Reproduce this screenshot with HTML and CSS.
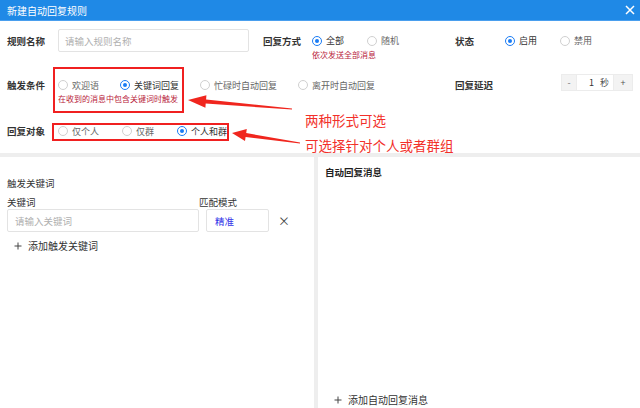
FILE: index.html
```html
<!DOCTYPE html>
<html lang="zh">
<head>
<meta charset="utf-8">
<title>新建自动回复规则</title>
<link rel="stylesheet" href="styles.css">
</head>
<body>
<div class="dialog">
  <header class="titlebar">
    <span class="title">新建自动回复规则</span>
    <svg class="close" width="10" height="10" viewBox="0 0 10 10"><path d="M1 1L9 9M9 1L1 9" stroke="#fff" stroke-width="1.5" fill="none"/></svg>
  </header>

  <section class="form">
    <div class="row row1">
      <div class="lbl">规则名称</div>
      <div class="input name-input">请输入规则名称</div>
      <div class="lbl">回复方式</div>
      <div class="group">
        <div class="radios">
          <span class="radio on"><i></i>全部</span>
          <span class="radio"><i></i>随机</span>
        </div>
        <div class="hint">依次发送全部消息</div>
      </div>
      <div class="lbl">状态</div>
      <div class="radios radios-status">
        <span class="radio on"><i></i>启用</span>
        <span class="radio"><i></i>禁用</span>
      </div>
    </div>

    <div class="row row2">
      <div class="lbl">触发条件</div>
      <div class="group span-wide">
        <div class="radios">
          <span class="radio"><i></i>欢迎语</span>
          <span class="radio on"><i></i>关键词回复</span>
          <span class="radio"><i></i>忙碌时自动回复</span>
          <span class="radio"><i></i>离开时自动回复</span>
        </div>
        <div class="hint">在收到的消息中包含关键词时触发</div>
      </div>
      <div class="lbl">回复延迟</div>
      <div class="stepper">
        <span class="step-btn minus">-</span>
        <span class="step-val"><b>1</b><em>秒</em></span>
        <span class="step-btn plus">+</span>
      </div>
    </div>

    <div class="row row3">
      <div class="lbl">回复对象</div>
      <div class="radios span-wide">
        <span class="radio"><i></i>仅个人</span>
        <span class="radio"><i></i>仅群</span>
        <span class="radio on"><i></i>个人和群</span>
      </div>
    </div>
  </section>

  <div class="band"></div>

  <div class="split">
    <div class="left">
      <div class="sec-title">触发关键词</div>
      <div class="kw-grid">
        <div class="kw-lbl">关键词</div>
        <div class="kw-lbl">匹配模式</div>
        <div></div>
        <div class="input kw-input">请输入关键词</div>
        <div class="input select">精准</div>
        <div class="remove">×</div>
      </div>
      <div class="add add-kw"><svg class="plus-icon" width="8" height="8" viewBox="0 0 8 8"><path d="M4 0.5V7.5M0.5 4H7.5" stroke="#444" stroke-width="1" fill="none"/></svg>添加触发关键词</div>
    </div>
    <div class="divider"></div>
    <div class="right">
      <div class="sec-title strong">自动回复消息</div>
      <div class="add add-msg"><svg class="plus-icon" width="8" height="8" viewBox="0 0 8 8"><path d="M4 0.5V7.5M0.5 4H7.5" stroke="#444" stroke-width="1" fill="none"/></svg>添加自动回复消息</div>
    </div>
  </div>

  <!-- annotations drawn over the screenshot -->
  <div class="mark mark1"></div>
  <div class="mark mark2"></div>
  <svg class="arrows" width="640" height="160" viewBox="0 0 640 160">
    <polygon fill="#f0261e" points="188,100 206.4,95.3 206.1,99.4 292,108.4 292,109.6 205.7,103.6 205.4,107.7"/>
    <polygon fill="#f0261e" points="232,133 246.8,128.9 246.2,133.1 300,142.4 300,143.6 245.6,136.9 245,141.1"/>
  </svg>
  <div class="note note1">两种形式可选</div>
  <div class="note note2">可选择针对个人或者群组</div>
</div>
</body>
</html>
```
FILE: styles.css
```css
html, body {
  margin: 0;
  padding: 0;
  background: #fff;
}
body {
  font-family: "Noto Sans CJK SC", "Noto Sans", sans-serif;
  font-size: 10px;
  color: #333;
}
.dialog {
  position: relative;
  width: 640px;
  height: 408px;
  overflow: hidden;
  display: flex;
  flex-direction: column;
}
.titlebar {
  flex: none;
  height: 21px;
  background: #1f89e6;
  color: #fff;
  display: flex;
  align-items: center;
  justify-content: space-between;
  padding: 0 5px 0 7px;
  font-size: 10px;
  border-bottom: 1px solid #4a9fee;
  box-sizing: border-box;
}
.title { line-height: 21px; }
.close { display: block; }

.form {
  flex: none;
  height: 132px;
  padding-top: 8px;
  box-sizing: border-box;
}
.row {
  display: grid;
  grid-template-columns: 51px 205px 51px 141px 56px 1fr;
  align-items: start;
  padding: 0 7px;
}
.lbl {
  font-weight: 700;
  font-size: 9.5px;
  color: #333;
  display: flex;
  align-items: center;
  white-space: nowrap;
}
.row1 .lbl, .row1 .radios { height: 23px; }
.row2 { margin-top: 15px; }
.row2 .lbl, .row2 .radios { height: 20px; }
.row3 { margin-top: 18px; }
.row3 .lbl, .row3 .radios { height: 18px; }

.input {
  box-sizing: border-box;
  border: 1px solid #e3e3e3;
  border-radius: 2px;
  background: #fff;
  height: 23px;
  display: flex;
  align-items: center;
  color: #b0b0b0;
  font-size: 9.5px;
}
.name-input {
  width: 191px;
  padding-left: 6px;
}

.radios {
  display: flex;
  align-items: center;
  gap: 23px;
}
.row2 .radios { gap: 21px; }
.radios-status { margin-left: -6px; }
.row1 .group { margin-left: -2px; }
.span-wide { grid-column: 2 / 5; }

.radio {
  display: inline-flex;
  align-items: center;
  font-size: 9px;
  color: #666;
  white-space: nowrap;
}
.radio i {
  box-sizing: border-box;
  width: 10px;
  height: 10px;
  border: 1px solid #d0d0d0;
  border-radius: 50%;
  margin-right: 4px;
  position: relative;
  background: #fff;
}
.radio.on { color: #333; }
.radio.on i { border-color: #1a7cf5; }
.radio.on i::after {
  content: "";
  position: absolute;
  left: 2px;
  top: 2px;
  width: 4px;
  height: 4px;
  border-radius: 50%;
  background: #1a7cf5;
}

.hint {
  font-size: 8px;
  line-height: 10px;
  color: #b8223a;
  white-space: nowrap;
}
.row1 .hint { margin-top: -2px; }
.row2 .hint { margin-top: -1px; }

.stepper {
  grid-column: 6;
  justify-self: end;
  margin-top: -1px;
  display: flex;
  height: 17px;
  box-sizing: border-box;
  border: 1px solid #ececec;
  font-size: 9px;
}
.step-btn {
  background: #f3f3f3;
  color: #777;
  display: flex;
  align-items: center;
  justify-content: center;
}
.minus { width: 14px; }
.plus { width: 18px; color: #555; }
.step-val {
  width: 38px;
  display: flex;
  align-items: center;
  justify-content: space-between;
  padding: 0 4px 0 12px;
  box-sizing: border-box;
  border-left: 1px solid #ececec;
  border-right: 1px solid #ececec;
}
.step-val b { font-weight: 400; color: #333; }
.step-val em { font-style: normal; color: #555; }

.band {
  flex: none;
  height: 4px;
  background: #eeeeee;
}
.split {
  flex: 1;
  display: flex;
  min-height: 0;
}
.left {
  width: 314px;
  padding: 20px 0 0 7px;
  box-sizing: border-box;
}
.divider {
  width: 4px;
  background: #eeeeee;
}
.right {
  flex: 1;
  padding: 9px 0 2px 7px;
  display: flex;
  flex-direction: column;
  justify-content: space-between;
}
.sec-title {
  font-size: 9.5px;
  line-height: 12px;
  color: #333;
}
.sec-title.strong { font-weight: 700; color: #222; }

.kw-grid {
  margin-top: 7px;
  display: grid;
  grid-template-columns: 192px 70px 30px;
  grid-template-rows: 12px 23px;
  row-gap: 1px;
  align-items: center;
}
.kw-lbl {
  font-size: 9.5px;
  line-height: 12px;
  color: #333;
}
.kw-input { padding-left: 7px; }
.select {
  width: 63px;
  margin-left: 7px;
  padding-left: 8px;
  color: #3535e8;
}
.remove {
  margin-left: 9px;
  font-size: 12px;
  color: #444;
  line-height: 23px;
}
.add {
  display: flex;
  align-items: center;
  font-size: 10px;
  line-height: 12px;
  color: #333;
}
.add-kw { margin-top: 8px; padding-left: 7px; }
.add-msg { padding-left: 9px; }
.plus-icon {
  display: block;
  flex: none;
  margin-right: 6px;
}

/* annotation overlay */
.mark {
  position: absolute;
  box-sizing: border-box;
  border: 2px solid #f02020;
  pointer-events: none;
}
.mark1 { left: 53px; top: 67px; width: 131px; height: 46px; }
.mark2 { left: 52px; top: 123px; width: 177px; height: 18px; }
.arrows {
  position: absolute;
  left: 0;
  top: 0;
  pointer-events: none;
}
.note {
  position: absolute;
  left: 305px;
  font-size: 13.5px;
  line-height: 16px;
  color: #f2302a;
  white-space: nowrap;
}
.note1 { top: 112px; }
.note2 { top: 137px; }
```
